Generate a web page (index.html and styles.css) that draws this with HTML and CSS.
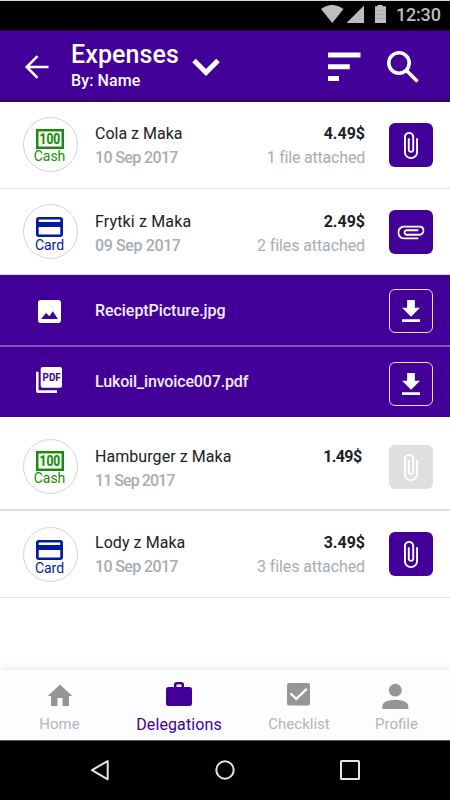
FILE: index.html
```html
<!DOCTYPE html>
<html lang="en">
<head>
<meta charset="utf-8">
<title>Expenses</title>
<link rel="stylesheet" href="styles.css">
</head>
<body>
<svg class="defs" aria-hidden="true">
  <symbol id="clip" viewBox="7 1 11 22" preserveAspectRatio="none"><path d="M16.5 6v11.5c0 2.21-1.79 4-4 4s-4-1.79-4-4V5c0-1.38 1.12-2.5 2.5-2.5s2.5 1.12 2.5 2.5v10.5c0 .55-.45 1-1 1s-1-.45-1-1V6H10v9.5c0 1.38 1.12 2.5 2.5 2.5s2.5-1.12 2.5-2.5V5c0-2.21-1.79-4-4-4S7 2.79 7 5v12.5c0 3.04 2.46 5.5 5.5 5.5s5.5-2.46 5.5-5.5V6z"/></symbol>
  <symbol id="card" viewBox="2 4 20 16" preserveAspectRatio="none"><path d="M20 4H4c-1.11 0-1.99.89-1.99 2L2 18c0 1.11.89 2 2 2h16c1.11 0 2-.89 2-2V6c0-1.11-.89-2-2-2zm0 14H4v-6h16v6zm0-10H4V6h16v2z"/></symbol>
  <symbol id="cash" viewBox="0 0 28 20"><rect x="1.2" y="1.2" width="25.6" height="17.6" fill="none" stroke="currentColor" stroke-width="2.5"/><text class="bill" x="3.6" y="15.2" textLength="20.6" lengthAdjust="spacingAndGlyphs">100</text></symbol>
  <symbol id="download" viewBox="5 3 14 17"><path d="M19 9h-4V3H9v6H5l7 7zM5 18v2h14v-2z"/></symbol>
</svg>

<div class="status">
  <svg class="signals" viewBox="0 0 66 18"><path d="M0 4Q11 -4 22.500 4L11.300 18zM25.500 18L43 .6V18z"/><path d="M56.500 0h5v1.200H65V18H54V1.200h2.500z"/><path class="seam" d="M54 5.500h11M54 9.500h11M54 13.500h11"/></svg>
  <span class="clock">12:30</span>
</div>

<header class="bar">
  <svg class="back" viewBox="0 0 24 24"><path d="M23.500 12H2M12.500 1.200L1.700 12l10.800 10.800"/></svg>
  <div class="heading">
    <h1>Expenses</h1>
    <p>By: Name</p>
  </div>
  <svg class="chevron" viewBox="0 0 28 18"><path d="M2 2.400l12 12 12-12"/></svg>
  <svg class="sort" viewBox="0 0 33 29"><path d="M0 .5h32.500v5H0zM0 12.200h21.800v5H0zM0 24h11v5H0z"/></svg>
  <svg class="search" viewBox="0 0 32 32"><circle cx="12" cy="12" r="10.200"/><path d="M19.500 19.500L30.500 30.500"/></svg>
</header>

<main>
  <section class="row r1">
    <div class="kind cash"><svg class="cash-icon"><use href="#cash"/></svg><span>Cash</span></div>
    <div class="what"><b class="n1">Cola z Maka</b><span>10 Sep 2017</span></div>
    <div class="sum"><b>4.49$</b><span class="one">1 file attached</span></div>
    <div class="btn"><svg class="clip"><use href="#clip"/></svg></div>
  </section>
  <section class="row r2">
    <div class="kind card"><svg class="card-icon"><use href="#card"/></svg><span>Card</span></div>
    <div class="what"><b class="n2">Frytki z Maka</b><span class="nine">09 Sep 2017</span></div>
    <div class="sum"><b>2.49$</b><span>2 files attached</span></div>
    <div class="btn"><svg class="clip turned"><use href="#clip"/></svg></div>
  </section>
  <section class="file f1">
    <svg class="picture" viewBox="3 3 18 18"><path fill-rule="evenodd" d="M21 19V5c0-1.100-.9-2-2-2H5c-1.100 0-2 .9-2 2v14c0 1.100.9 2 2 2h14c1.100 0 2-.9 2-2zM5.400 17.900l3.900-4.700 2.600 2.500 2.700-3.800 4 6z"/></svg>
    <span class="name jpg">RecieptPicture.jpg</span>
    <div class="btn outline"><svg class="download"><use href="#download"/></svg></div>
  </section>
  <section class="file f2">
    <svg class="pdf" viewBox="0 0 26 26"><rect x="4.700" width="21.300" height="20.700" rx="2"/><path d="M0 4.700h2.600v18.500H21v2.700H2.500Q0 25.900 0 23.400z"/><text x="6.500" y="14.100" textLength="18.300" lengthAdjust="spacingAndGlyphs">PDF</text></svg>
    <span class="name doc">Lukoil_invoice007.pdf</span>
    <div class="btn outline"><svg class="download"><use href="#download"/></svg></div>
  </section>
  <section class="row r3">
    <div class="kind cash"><svg class="cash-icon"><use href="#cash"/></svg><span>Cash</span></div>
    <div class="what"><b class="n3">Hamburger z Maka</b><span class="eleven">11 Sep 2017</span></div>
    <div class="sum short"><b>1.49$</b></div>
    <div class="btn off"><svg class="clip"><use href="#clip"/></svg></div>
  </section>
  <section class="row r4">
    <div class="kind card"><svg class="card-icon"><use href="#card"/></svg><span>Card</span></div>
    <div class="what"><b class="n4">Lody z Maka</b><span>10 Sep 2017</span></div>
    <div class="sum"><b>3.49$</b><span>3 files attached</span></div>
    <div class="btn"><svg class="clip"><use href="#clip"/></svg></div>
  </section>
</main>

<nav class="tabs">
  <div class="tab"><svg viewBox="0 0 26 28"><path d="M13 2.500L.8 14H4v10h6.500v-8h5v8H22V14h3.200z"/></svg><span class="home">Home</span></div>
  <div class="tab active"><svg viewBox="0 0 26 28"><path fill-rule="evenodd" d="M10.500 0h5Q18 0 18 2.500V5h5.500Q26 5 26 7.500V21.500Q26 24 23.500 24H2.500Q0 24 0 21.500V7.500Q0 5 2.500 5H8V2.500Q8 0 10.500 0zM10.500 2.400V5h5V2.400z"/></svg><span>Delegations</span></div>
  <div class="tab"><svg viewBox="0 0 26 28"><path fill-rule="evenodd" d="M4 1h18q2 0 2 2v18.500q0 2-2 2H3q-2 0-2-2V3q0-2 2-2zM3.700 12.300l6.500 6.300L21.600 7.700 20 6 10.200 15.200 5.300 10.500z"/></svg><span>Checklist</span></div>
  <div class="tab"><svg viewBox="0 0 26 28"><circle cx="11.300" cy="8.200" r="6.400"/><path d="M-1.700 27v-3.200c0-3.200 6-6.100 13-6.100s13 2.900 13 6.100V27z"/></svg><span>Profile</span></div>
</nav>

<footer class="system">
  <svg viewBox="0 0 22 22"><path d="M18.700 2v18.300L3 11.100z"/></svg>
  <svg viewBox="0 0 22 22"><circle cx="11" cy="11" r="8.700"/></svg>
  <svg viewBox="0 0 22 22"><rect x="2" y="2" width="18" height="18" rx=".6"/></svg>
</footer>
</body>
</html>
```
FILE: styles.css
```css
* { box-sizing: border-box; }
body { margin: 0; width: 450px; height: 800px; overflow: hidden; display: flex; flex-direction: column; background: #fff; font-family: Roboto, "Liberation Sans", sans-serif; }
svg { display: block; flex: none; overflow: visible; fill: currentColor; }
.defs { position: absolute; width: 0; height: 0; }
h1, p { margin: 0; }

.status { height: 30px; flex: none; background: #000; border-top: 1px solid #d4d8d8; display: flex; justify-content: flex-end; align-items: flex-start; padding: 4px 9px 0 0; gap: 9px; color: #bdbdbd; }
.signals { width: 66px; height: 18px; }
.seam { stroke: #9c9c9c; stroke-width: .6; }
.clock { width: 45px; font-size: 18px; line-height: 20px; font-weight: 500; white-space: nowrap; letter-spacing: -.2px; }

.bar { height: 72px; flex: none; background: #430098; border-top: 1px solid #28005b; border-bottom: 2px solid #28104c; color: #fff; display: flex; align-items: flex-start; padding-left: 25px; }
.back, .chevron, .search { fill: none; stroke: currentColor; }
.back { width: 24px; height: 24px; margin-top: 24px; stroke-width: 2.5; }
.heading { width: 109px; margin-left: 22px; white-space: nowrap; }
h1 { margin-top: 9px; font-size: 25px; line-height: 30px; font-weight: 500; letter-spacing: .1px; }
.heading p { font-size: 16px; line-height: 20px; font-weight: 500; margin-top: 1px; letter-spacing: .1px; }
.chevron { width: 28px; height: 18px; margin: 27px 0 0 12px; stroke-width: 5; }
.sort { width: 33px; height: 29px; margin: 21px 0 0 108px; }
.search { width: 32px; height: 32px; margin: 20px 0 0 26px; stroke-width: 3.6; }

.row { display: flex; align-items: flex-start; padding-left: 22.500px; border-bottom: 2px solid #dedfe1; }
.r1 { height: 87px; padding-top: 15px; border-bottom-width: 1px; }
.r2 { height: 86px; padding-top: 15px; border-bottom-width: 1px; }
.r3 { height: 94px; padding-top: 22px; }
.r4 { height: 87px; padding-top: 16px; border-bottom-width: 1px; }
.kind { width: 55px; height: 55px; flex: none; border: 1px solid #d3d3d5; border-radius: 50%; display: flex; flex-direction: column; align-items: center; font-size: 14px; line-height: 16px; }
.cash { color: #168c08; }
.card { color: #001c9c; }
.cash-icon { width: 28px; height: 20px; margin: 10.500px 1px 0 0; }
.card-icon { width: 27px; height: 20px; margin: 12px 1px 0 0; }
.kind span { margin: -1px 1px 0 0; }
.card span { margin-top: 0; }
.bill { font: 700 14px Roboto, sans-serif; stroke: currentColor; stroke-width: .2; }
.what, .sum { display: flex; flex-direction: column; font-size: 16px; line-height: 20px; gap: 4px; margin-top: 7px; white-space: nowrap; }
.what { width: 150px; margin-left: 17.500px; align-items: flex-start; }
.sum { width: 120px; align-items: flex-end; }
.what b { font-weight: 400; color: #202124; }
.n2 { letter-spacing: .15px; }
.n3, .n4 { letter-spacing: .06px; }
.what span, .sum span { color: #a6adb4; }
.what span { font-weight: 500; letter-spacing: -.63px; }
.what .nine { letter-spacing: -.38px; }
.what .eleven { letter-spacing: -.95px; }
.sum span { letter-spacing: -.1px; }
.sum .one { letter-spacing: -.2px; }
.sum b { font-weight: 700; color: #202124; }
.sum.short { padding-right: 3.500px; letter-spacing: -.6px; }
.btn { width: 44px; height: 44px; flex: none; margin: 6px 0 0 23.500px; border-radius: 6px; background: #430098; color: #fff; display: flex; align-items: center; justify-content: center; }
.off { background: #dfdfdf; }
.outline { border: 1.500px solid #e7def2; }
.clip { width: 14px; height: 27px; }
.turned { transform: rotate(90deg); }
.r2 .what, .r2 .sum, .r3 .what, .r3 .sum { margin-top: 8px; }
.r4 .what, .r4 .sum { margin-top: 6px; }
.r4 .btn { margin-top: 5px; }

.file { background: #430098; color: #fff; display: flex; align-items: flex-start; }
.f1 { height: 72px; padding: 14px 0 0 38px; border-bottom: 2px solid #8258b9; }
.f2 { height: 70px; padding: 15px 0 0 36px; }
.picture { width: 23px; height: 23px; margin-top: 11px; }
.pdf { width: 26px; height: 26px; margin-top: 5px; }
.pdf text { font: 700 10.800px Roboto, sans-serif; fill: #430098; }
.name { font-size: 16px; line-height: 20px; font-weight: 500; width: 293.500px; color: #f3eef8; white-space: nowrap; }
.jpg { margin: 12px 0 0 34px; letter-spacing: -.05px; }
.doc { margin: 10px 0 0 33px; letter-spacing: -.15px; }
.f1 .btn, .f2 .btn { margin: 0; }
.download { width: 18px; height: 22px; }

.tabs { height: 70px; flex: none; margin-top: auto; background: #fcfdff; box-shadow: 0 -2px 7px rgba(0,0,0,.09); display: grid; grid-template-columns: 119px 120px 120px 75px; color: #969696; }
.tab { display: flex; flex-direction: column; align-items: center; padding-top: 12px; }
.tab svg { width: 26px; height: 28px; }
.tab span { margin-top: 4px; font-size: 15px; line-height: 20px; color: #b5b6b8; white-space: nowrap; }
.tab.active { color: #430098; }
.tab.active span { color: #430098; font-size: 16px; margin-top: 5px; letter-spacing: .1px; }
.system { height: 60px; flex: none; background: #000; border-top: 1px solid #555; display: flex; justify-content: center; gap: 103px; padding-top: 18px; color: #e5e5e5; }
.system svg { width: 22px; height: 22px; fill: none; stroke: currentColor; stroke-width: 2; stroke-linejoin: round; }
```
